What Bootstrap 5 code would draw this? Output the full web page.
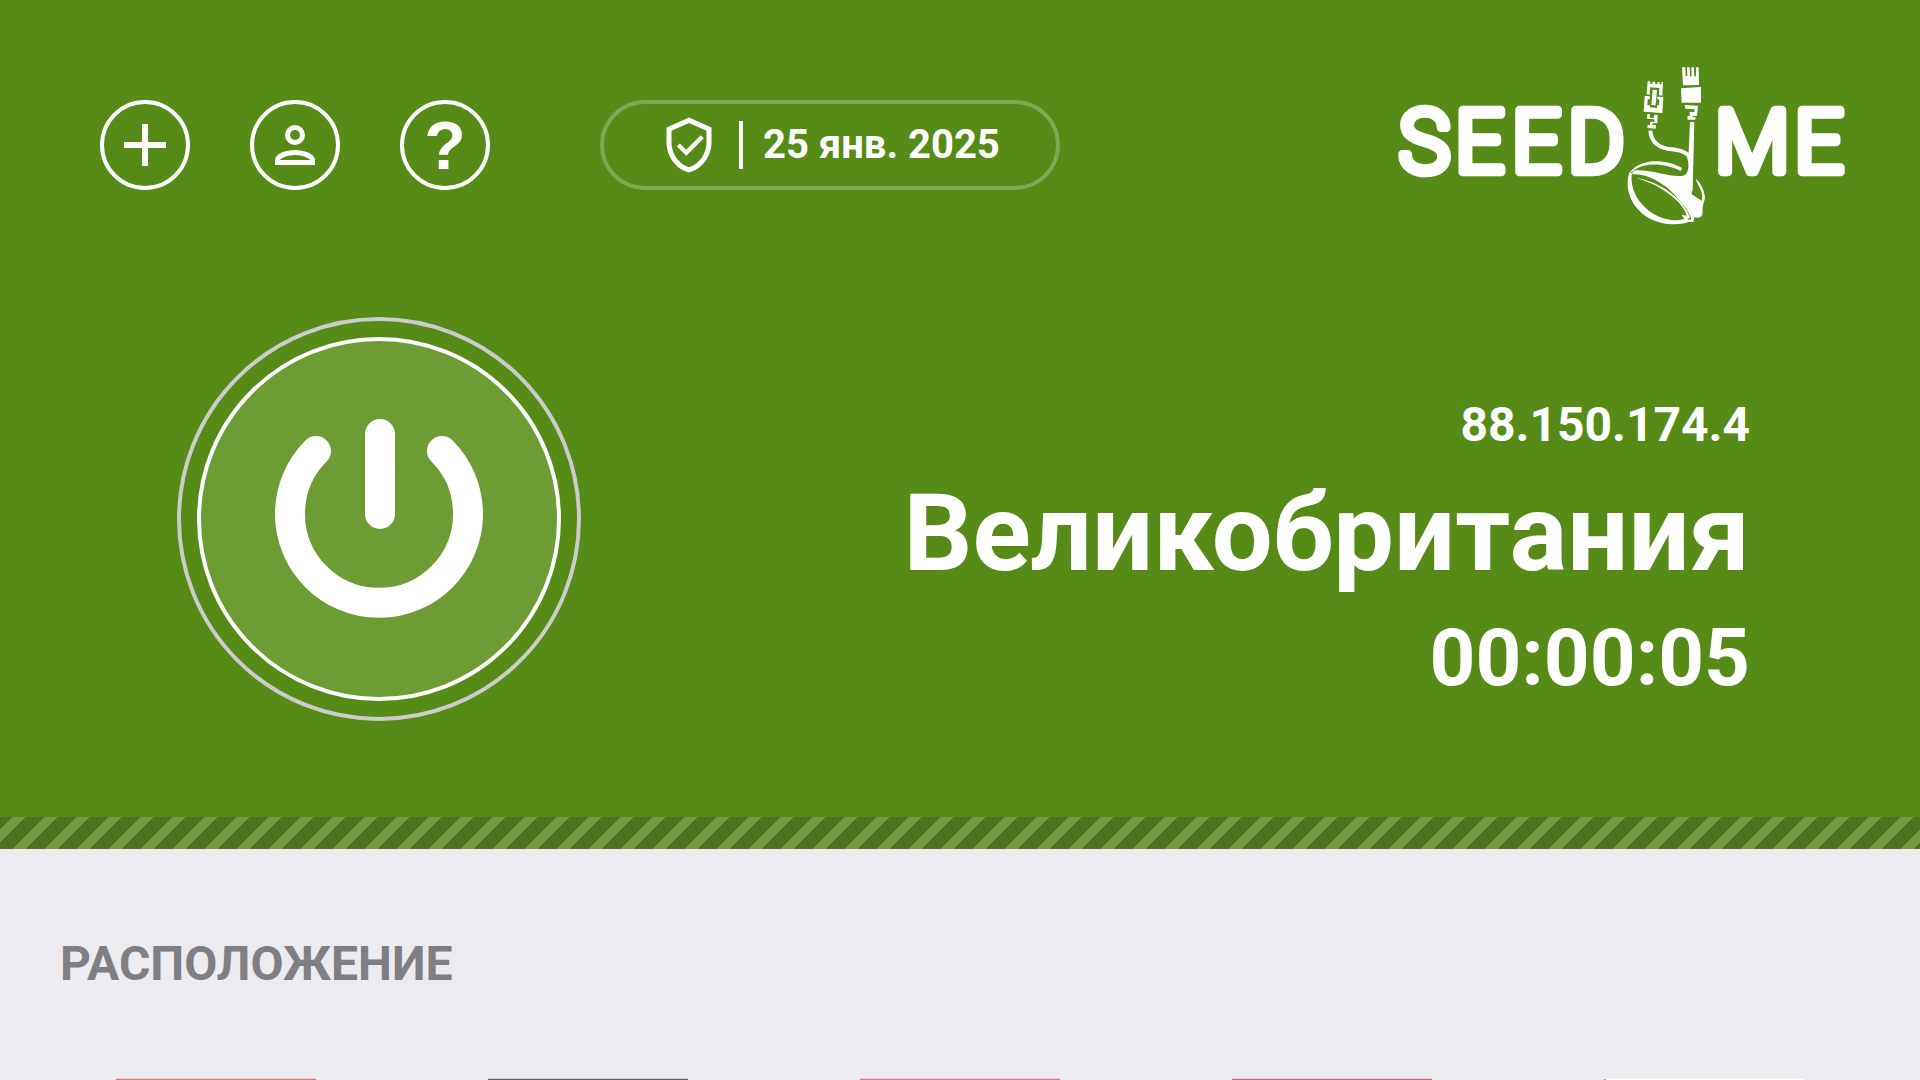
<!DOCTYPE html>
<html lang="ru">
<head>
<meta charset="utf-8">
<meta name="viewport" content="width=device-width, initial-scale=1">
<title>Seed4Me VPN</title>
<link href="https://cdn.jsdelivr.net/npm/bootstrap@5.3.0/dist/css/bootstrap.min.css" rel="stylesheet">
<style>
  body { font-family: Roboto, "Noto Sans", sans-serif; background: #ebebf0; }
  .hero { background: #558b16; padding: 50px 0 96px; }
  .topbar { padding: 0 60px 0 100px; }
  .actions { gap: 60px; }
  .round-btn { width: 90px; height: 90px; border: 4px solid #fff; color: #fff; background: transparent; }
  .help-glyph { font: 700 68px/64px "Liberation Sans", Arial, sans-serif; }
  .expiry { height: 90px; margin-left: 50px; padding: 0 56px 0 55px; border: 4px solid rgba(255, 255, 255, .25); }
  .expiry-rule { width: 4px; height: 48px; margin: 0 20px; background: #fff; }
  .expiry-date { font-size: 40px; line-height: 48px; }
  .status { padding: 77px 170px 0 177px; }
  .status-text { padding-top: 76px; }
  .ip-line { font-size: 48px; line-height: 64px; }
  .country-line { font-size: 108px; line-height: 152px; }
  .timer-line { font-size: 80px; line-height: 98px; }
  .stripes {
    height: 32px;
    background: linear-gradient(135deg, #4e7320 19%, #729c40 19% 40%, #4e7320 40% 69%, #729c40 69% 90%, #4e7320 90%) 0 0 / 32px 32px;
  }
  .places { padding: 83px 30px 0; }
  .places-title { font-size: 48px; line-height: 64px; color: #7f7e83; padding: 0 30px; margin-bottom: 82px; }
  .flag { width: 200px; height: 134px; border-top: 1px solid rgba(255, 255, 255, .3); background-clip: padding-box; }
  .flag-a { background-color: #e07573; border-color: #e9cfd3; }
  .flag-b { background-color: #66626a; border-color: #ccccd2; }
  .flag-c { background-color: #e07a84; border-color: #eacfd7; }
  .flag-d { background-color: #c56a76; border-color: #e5cdd5; }
  .flag-e { background: linear-gradient(90deg, #9a98bd 2px, #fff 2px); border-color: #f1f1f5; }
</style>
</head>
<body class="vh-100 overflow-hidden d-flex flex-column">
<header class="hero text-white flex-shrink-0">
  <nav class="topbar d-flex align-items-center justify-content-between">
    <div class="actions d-flex align-items-center">
      <button type="button" class="round-btn rounded-circle p-0 d-flex align-items-center justify-content-center" aria-label="Добавить">
        <svg width="72" height="72" viewBox="0 0 24 24" fill="currentColor"><path d="M19 13h-6v6h-2v-6H5v-2h6V5h2v6h6z"/></svg>
      </button>
      <button type="button" class="round-btn rounded-circle p-0 d-flex align-items-center justify-content-center" aria-label="Профиль">
        <svg width="60" height="60" viewBox="0 0 24 24" fill="currentColor" fill-rule="evenodd"><path d="M12 4a4 4 0 1 0 0 8 4 4 0 0 0 0-8zm0 2a2 2 0 1 1 0 4 2 2 0 0 1 0-4zM12 14c-3.500 0-8 1.350-8 4v2h16v-2c0-2.650-4.500-4-8-4zM6 18c.22-.72 3.310-2 6-2 2.700 0 5.800 1.290 6 2z"/></svg>
      </button>
      <button type="button" class="round-btn rounded-circle p-0 d-flex align-items-center justify-content-center" aria-label="Помощь"><span class="help-glyph">?</span></button>
      <div class="expiry rounded-pill d-flex align-items-center">
        <svg width="60" height="60" viewBox="0 0 24 24" fill="currentColor"><path d="M12 1L3 5v6c0 5.550 3.840 10.740 9 12 5.160-1.260 9-6.450 9-12V5l-9-4zm7 10c0 4.520-2.980 8.690-7 9.930-4.020-1.240-7-5.410-7-9.930V6.300l7-3.110 7 3.110V11z"/><path d="M7.700 12l3.200 3.100 6.400-6.400" fill="none" stroke="currentColor" stroke-width="1.700"/></svg>
        <span class="expiry-rule"></span>
        <span class="expiry-date fw-bold">25 янв. 2025</span>
      </div>
    </div>
    <svg class="flex-shrink-0" width="480" height="190" viewBox="0 0 1440 570" fill="#fff" role="img" aria-label="Seed4Me">
      <g font-family="Roboto, sans-serif" font-weight="300" font-size="260" stroke="#fff" stroke-width="26" stroke-linejoin="round">
        <text x="56 225 395 563" y="366">SEED</text>
        <text x="1004 1243" y="366">ME</text>
      </g>
      <!-- left plug -->
      <path d="M803 93l7 1 1 7 6 1 1-7 7 0 1 7 6 1 1-7 5 0 1 7 5 1 1-8 4 0-2 41-10-1 1-22-28-2-1 22-9-1z"/>
      <path d="M794 138l16 1-1 9-6 0-1 18 8 0 0 6 21 2 1-8 5 0 1-18-6 0 0-8 18 1-3 48-56-4z"/>
      <path d="M818 119l13 1-4 46-13-1z"/>
      <path d="M802 192l8 1-1 10 13 1 0-10 11 1-1 25-14-1-1 6 11 1-1 10-25-2 1-9 7 0 0-10 13 1 0-8-22-2z"/>
      <!-- right plug -->
      <path d="M906 52l10 0 1 26 5 0-1-26 8 0 1 27 5 0-1-27 8 0 1 27 5 0 0-27 8 0 1 53-48 1z"/>
      <path d="M903 115l60-4 0 47-58 0z"/>
      <path d="M914 165l40 2-3 31-13-1 0 5 9 0-1 7-23 0-1-10 7-1 0-12 14 0 1-8-28-2z"/>
      <!-- cables running into the seed -->
      <path d="M811 242c3 36 28 50 52 54 28 3 54 6 65 25" fill="none" stroke="#fff" stroke-width="12"/>
      <path d="M930 216l13 1-5 203-4 12 31 20 2-10c1-20-15-38-20-56 18 16 27 38 28 58l-7 26-1 24c-4 10-14 10-24 8l-3 14-15-1c-8-2-18-1-24-6l12-2-8-12 18 2c-22-68-108-130-164-124-5-4 0-10 8-12 50-2 100 20 138 17 24-4 23-34 16-58l5-14z"/>
      <!-- seed shell -->
      <path d="M748 368c-22 64 26 150 128 155 26 0 44-4 58-10l-6-8c-66 20-128-14-158-64-14-26-18-50-14-72z"/>
      <path d="M746 371c14-20 42-36 78-37 34 0 60 8 82 20l-4 9c-40-20-98-28-134-6-10 5-14 10-20 14z"/>
      <path d="M768 384c66 8 136 64 148 106 2 6 6 14 10 20l8-2c-14-52-92-112-160-126z" fill="#558b16"/>
      <path d="M768 384c70 18 136 68 150 106l4 16 8-2c-16-54-88-110-162-120z"/>
    </svg>
  </nav>
  <section class="status d-flex align-items-start justify-content-between">
    <button type="button" class="btn p-0 border-0 rounded-circle lh-1" aria-label="Отключить VPN">
      <svg class="d-block" width="404" height="404" viewBox="0 0 404 404" fill="none" stroke="#fff">
        <circle cx="202" cy="202" r="200" stroke="#ccc" stroke-width="4"/>
        <circle cx="202" cy="202" r="180" fill="#6c9c33" stroke-width="4"/>
        <g stroke-width="30" stroke-linecap="round"><path d="M139 134a89 89 0 1 0 126 0"/><path d="M203 117v80"/></g>
      </svg>
    </button>
    <div class="status-text text-end fw-bold">
      <div class="ip-line">88.150.174.4</div>
      <h1 class="country-line fw-bold m-0">Великобритания</h1>
      <div class="timer-line">00:00:05</div>
    </div>
  </section>
</header>
<div class="stripes flex-shrink-0"></div>
<main class="places flex-grow-1">
  <h2 class="places-title fw-bold">РАСПОЛОЖЕНИЕ</h2>
  <div class="row row-cols-5 g-0">
    <div class="col d-flex justify-content-center"><div class="flag flag-a"></div></div>
    <div class="col d-flex justify-content-center"><div class="flag flag-b"></div></div>
    <div class="col d-flex justify-content-center"><div class="flag flag-c"></div></div>
    <div class="col d-flex justify-content-center"><div class="flag flag-d"></div></div>
    <div class="col d-flex justify-content-center"><div class="flag flag-e"></div></div>
  </div>
</main>
<script src="https://cdn.jsdelivr.net/npm/bootstrap@5.3.0/dist/js/bootstrap.bundle.min.js"></script>
</body>
</html>
